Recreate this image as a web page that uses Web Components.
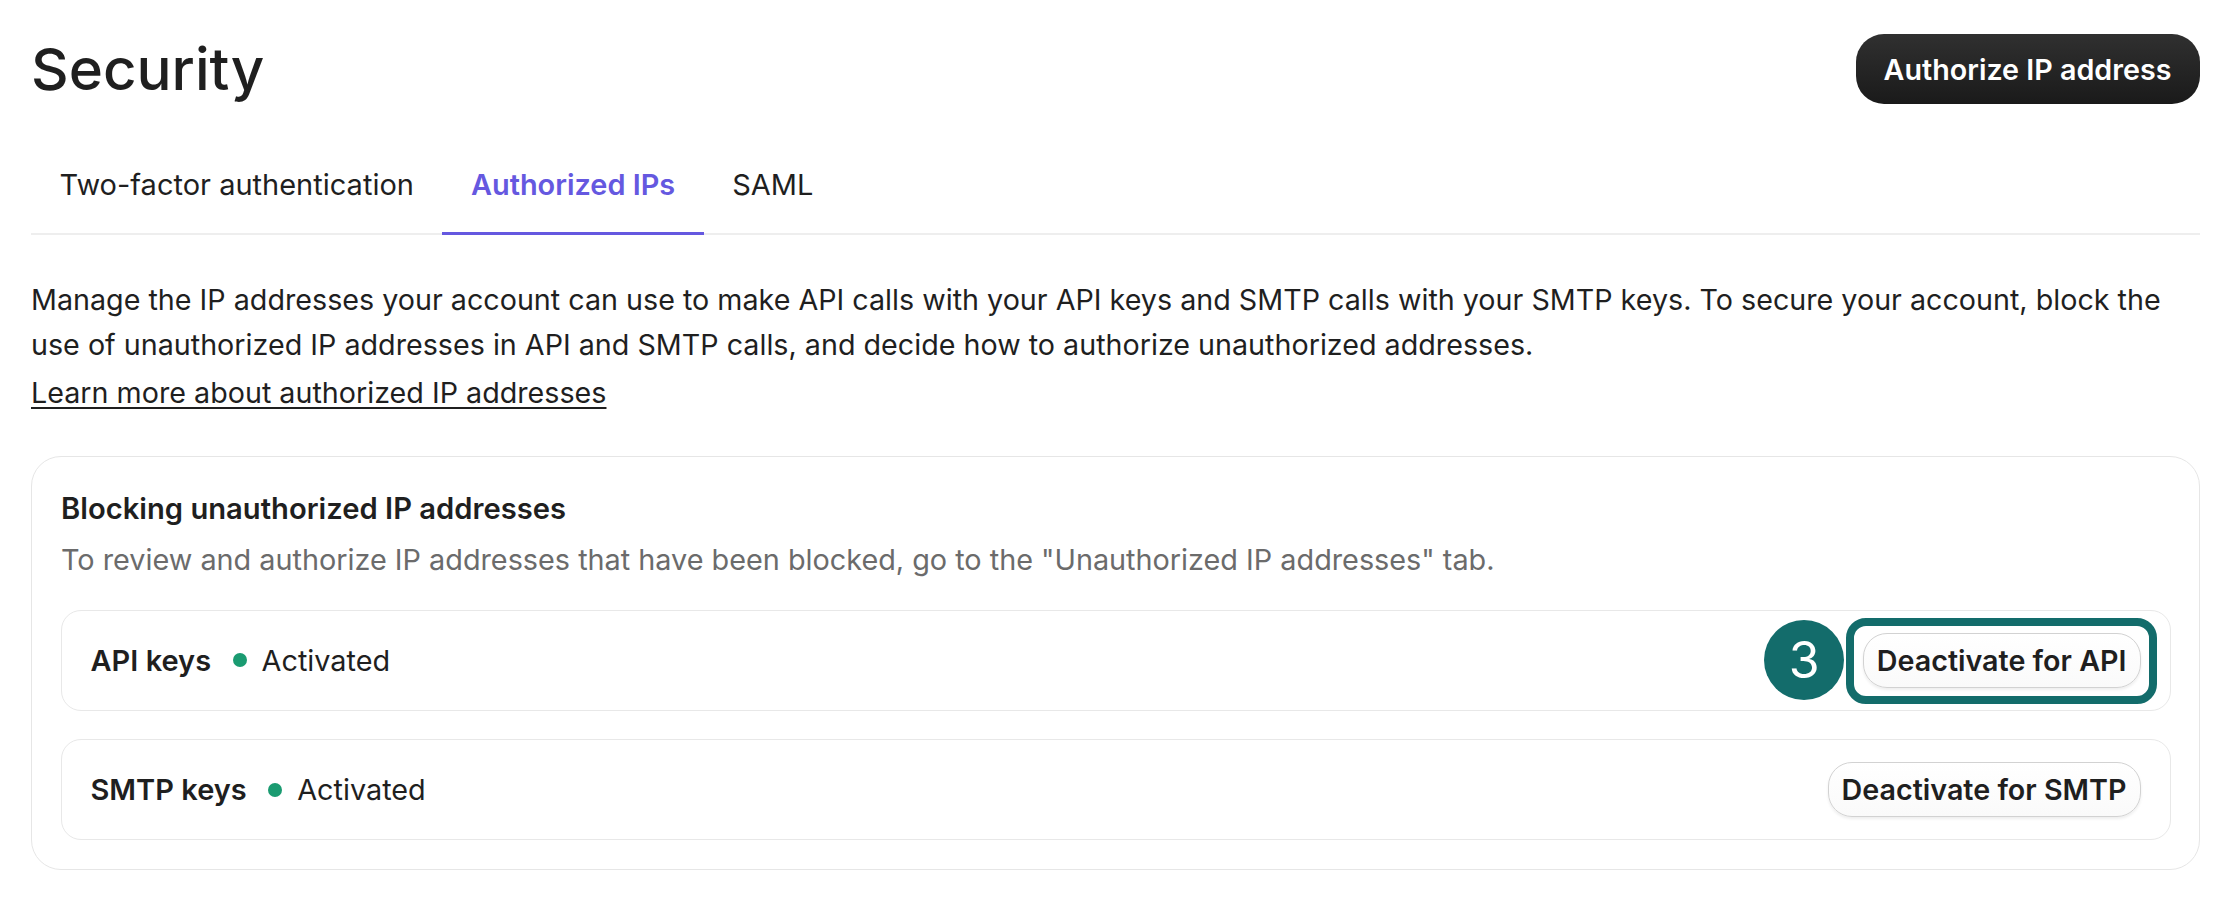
<!DOCTYPE html>
<html lang="en">
<head>
<meta charset="utf-8">
<title>Security</title>
<style>
  html, body { margin: 0; background: #fff; }
  body { font-family: Inter, "Liberation Sans", sans-serif; font-size: 28.8px; color: #1f1f1f; }
</style>
</head>
<body>
<security-page>
  <page-header slot="header" title="Security">
    <app-button variant="primary">Authorize IP address</app-button>
  </page-header>
  <tab-bar slot="tabs">
    <tab-item>Two-factor authentication</tab-item>
    <tab-item active>Authorized IPs</tab-item>
    <tab-item>SAML</tab-item>
  </tab-bar>
  <intro-text slot="intro" link="Learn more about authorized IP addresses">Manage the IP addresses your account can use to make API calls with your API keys and SMTP calls with your SMTP keys. To secure your account, block the use of unauthorized IP addresses in API and SMTP calls, and decide how to authorize unauthorized addresses.</intro-text>
  <block-card slot="card" heading="Blocking unauthorized IP addresses" description="To review and authorize IP addresses that have been blocked, go to the &quot;Unauthorized IP addresses&quot; tab.">
    <key-row name="API keys" status="Activated">
      <step-callout number="3">
        <app-button>Deactivate for API</app-button>
      </step-callout>
    </key-row>
    <key-row name="SMTP keys" status="Activated">
      <app-button>Deactivate for SMTP</app-button>
    </key-row>
  </block-card>
</security-page>

<script>
'use strict';

class SecurityPage extends HTMLElement {
  constructor() {
    super();
    this.attachShadow({ mode: 'open' });
    this.shadowRoot.innerHTML = `
      <style>
        :host {
          display: flex;
          flex-direction: column;
          padding: 34px 24.5px 0 31px;
        }
      </style>
      <slot name="header"></slot>
      <slot name="tabs"></slot>
      <slot name="intro"></slot>
      <slot name="card"></slot>
    `;
  }
}

class PageHeader extends HTMLElement {
  constructor() {
    super();
    this.attachShadow({ mode: 'open' });
    this.shadowRoot.innerHTML = `
      <style>
        :host {
          display: flex;
          justify-content: space-between;
          align-items: center;
          height: 70px;
        }
        h1 {
          margin: 0;
          font-size: 58.3px;
          font-weight: 450;
          line-height: 70px;
          color: #1f1f1f;
        }
      </style>
      <h1>${this.getAttribute('title')}</h1>
      <slot></slot>
    `;
    this.removeAttribute('title');
  }
}

class AppButton extends HTMLElement {
  constructor() {
    super();
    this.attachShadow({ mode: 'open' });
    this.shadowRoot.innerHTML = `
      <style>
        :host {
          display: inline-flex;
          align-items: center;
          box-sizing: border-box;
          height: 55px;
          padding: 0 13px;
          border: 1.5px solid #d2d2d2;
          border-radius: 24px;
          background: linear-gradient(#fff, #fafafa);
          box-shadow: 0 2px 3px rgba(0, 0, 0, .07);
          font-size: 28.7px;
          font-weight: 630;
          color: #1f1f1f;
          white-space: nowrap;
        }
        :host([variant="primary"]) {
          height: 70px;
          padding: 0 28px;
          border: 0;
          border-radius: 28px;
          background: linear-gradient(#303030, #1a1a1a);
          box-shadow: none;
          color: #fff;
        }
      </style>
      <slot></slot>
    `;
  }
}

class TabBar extends HTMLElement {
  constructor() {
    super();
    this.attachShadow({ mode: 'open' });
    this.shadowRoot.innerHTML = `
      <style>
        :host {
          display: flex;
          margin-top: 61px;
          border-bottom: 2px solid #eee;
        }
      </style>
      <slot></slot>
    `;
  }
}

class TabItem extends HTMLElement {
  constructor() {
    super();
    this.attachShadow({ mode: 'open' });
    this.shadowRoot.innerHTML = `
      <style>
        :host {
          display: block;
          padding: 0 28.5px 27px;
          margin-bottom: -2px;
          border-bottom: 3px solid transparent;
          font-size: 29px;
          line-height: 40px;
          color: #1f1f1f;
        }
        :host([active]) {
          border-bottom-color: #6558e0;
          color: #6558e0;
          font-size: 28.9px;
          font-weight: 630;
        }
      </style>
      <slot></slot>
    `;
  }
}

class IntroText extends HTMLElement {
  constructor() {
    super();
    this.attachShadow({ mode: 'open' });
    this.shadowRoot.innerHTML = `
      <style>
        :host {
          display: block;
          margin-top: 42px;
          font-size: 28.7px;
          line-height: 45px;
          color: #1f1f1f;
        }
        a {
          display: block;
          margin-top: 3px;
          color: inherit;
          text-decoration: underline;
          text-underline-offset: 4px;
          text-decoration-thickness: 2px;
        }
      </style>
      <slot></slot>
      <a href="#">${this.getAttribute('link')}</a>
    `;
  }
}

class BlockCard extends HTMLElement {
  constructor() {
    super();
    this.attachShadow({ mode: 'open' });
    this.shadowRoot.innerHTML = `
      <style>
        :host {
          display: flex;
          flex-direction: column;
          gap: 28px;
          margin-top: 41px;
          padding: 29px 28px 29px 29px;
          border: 1.5px solid #e6e6e6;
          border-radius: 30px;
        }
        h2 {
          margin: 0;
          font-size: 29.2px;
          font-weight: 630;
          line-height: 46px;
          color: #1f1f1f;
        }
        p {
          margin: 5px 0 0;
          line-height: 46px;
          color: #6b6b6b;
        }
        .head {
          margin-bottom: -1.5px;
        }
        .rows {
          display: flex;
          flex-direction: column;
          gap: 28.5px;
        }
      </style>
      <div class="head">
        <h2>${this.getAttribute('heading')}</h2>
        <p>${this.getAttribute('description')}</p>
      </div>
      <div class="rows"><slot></slot></div>
    `;
  }
}

class KeyRow extends HTMLElement {
  constructor() {
    super();
    this.attachShadow({ mode: 'open' });
    this.shadowRoot.innerHTML = `
      <style>
        :host {
          display: flex;
          align-items: center;
          box-sizing: border-box;
          height: 101px;
          padding: 0 29px 0 28.5px;
          border: 1.5px solid #e8e8e8;
          border-radius: 20px;
        }
        strong {
          font-size: 29px;
          font-weight: 630;
        }
        .dot {
          width: 14px;
          height: 14px;
          margin: 0 15px 0 21.5px;
          border-radius: 50%;
          background: #1a9b71;
        }
        .action {
          margin-left: auto;
        }
      </style>
      <strong>${this.getAttribute('name')}</strong>
      <span class="dot"></span>
      <span>${this.getAttribute('status')}</span>
      <span class="action"><slot></slot></span>
    `;
  }
}

// рамка и номер шага лежат поверх кнопки, поэтому здесь absolute
class StepCallout extends HTMLElement {
  constructor() {
    super();
    this.attachShadow({ mode: 'open' });
    this.shadowRoot.innerHTML = `
      <style>
        :host {
          display: inline-flex;
          position: relative;
        }
        .frame {
          position: absolute;
          inset: -15px -16.5px -16px -17px;
          border: 8px solid #136c6b;
          border-radius: 20px;
          pointer-events: none;
        }
        .number {
          position: absolute;
          top: 50%;
          right: 100%;
          width: 80px;
          height: 80px;
          margin: -40px 18.5px 0 0;
          display: flex;
          align-items: center;
          justify-content: center;
          border-radius: 50%;
          background: #136c6b;
          color: #fff;
          font-size: 50px;
          font-weight: 400;
        }
      </style>
      <slot></slot>
      <span class="frame"></span>
      <span class="number">${this.getAttribute('number')}</span>
    `;
  }
}

customElements.define('security-page', SecurityPage);
customElements.define('page-header', PageHeader);
customElements.define('app-button', AppButton);
customElements.define('tab-bar', TabBar);
customElements.define('tab-item', TabItem);
customElements.define('intro-text', IntroText);
customElements.define('block-card', BlockCard);
customElements.define('key-row', KeyRow);
customElements.define('step-callout', StepCallout);
</script>
</body>
</html>
